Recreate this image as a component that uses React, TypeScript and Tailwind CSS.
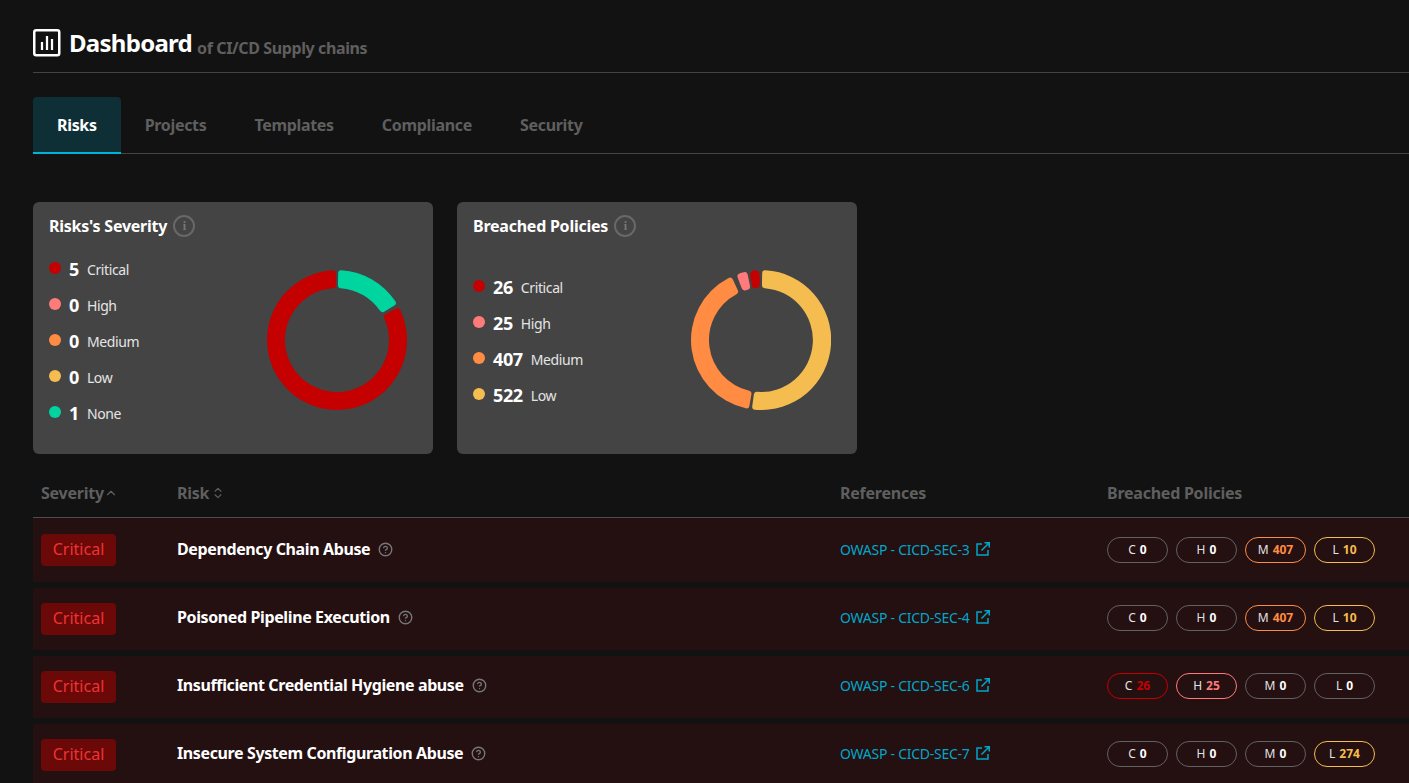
import { ChevronUp, ChevronsUpDown, CircleHelp } from "lucide-react";

const COLORS = {
  critical: "#c40000",
  high: "#ff7b7b",
  medium: "#ff8c42",
  low: "#f5bd4f",
  none: "#00d5a0",
};

type Seg = { color: string; from: number; to: number; corner?: number };

function pt(cx: number, cy: number, r: number, deg: number) {
  const a = (deg * Math.PI) / 180;
  return `${(cx + r * Math.sin(a)).toFixed(2)} ${(cy - r * Math.cos(a)).toFixed(2)}`;
}

// annular sector with rounded corners, angles clockwise from 12 o'clock
function sector(cx: number, cy: number, ro: number, ri: number, a0: number, a1: number, c: number) {
  const dO = (Math.asin(c / (ro - c)) * 180) / Math.PI;
  const dI = (Math.asin(c / (ri + c)) * 180) / Math.PI;
  const rOe = Math.sqrt((ro - c) ** 2 - c ** 2);
  const rIe = Math.sqrt((ri + c) ** 2 - c ** 2);
  const large = a1 - a0 > 180 ? 1 : 0;
  return [
    `M ${pt(cx, cy, rOe, a0)}`,
    `A ${c} ${c} 0 0 1 ${pt(cx, cy, ro, a0 + dO)}`,
    `A ${ro} ${ro} 0 ${large} 1 ${pt(cx, cy, ro, a1 - dO)}`,
    `A ${c} ${c} 0 0 1 ${pt(cx, cy, rOe, a1)}`,
    `L ${pt(cx, cy, rIe, a1)}`,
    `A ${c} ${c} 0 0 1 ${pt(cx, cy, ri, a1 - dI)}`,
    `A ${ri} ${ri} 0 ${large} 0 ${pt(cx, cy, ri, a0 + dI)}`,
    `A ${c} ${c} 0 0 1 ${pt(cx, cy, rIe, a0)}`,
    "Z",
  ].join(" ");
}

function Donut({ segs }: { segs: Seg[] }) {
  return (
    <svg width="140" height="140" viewBox="0 0 140 140" className="shrink-0">
      {segs.map((s) => (
        <path key={s.from} d={sector(70, 70, 70, 52, s.from, s.to, s.corner ?? 3)} fill={s.color} />
      ))}
    </svg>
  );
}

function InfoIcon() {
  return (
    <span className="flex h-[22px] w-[22px] items-center justify-center rounded-full border-2 border-[#686868] font-['Liberation_Serif',serif] text-[12px] leading-none font-bold text-[#777777]">
      i
    </span>
  );
}

function Card({
  title,
  legend,
  segs,
  centered,
}: {
  title: string;
  legend: { color: string; n: number; label: string }[];
  segs: Seg[];
  centered?: boolean;
}) {
  return (
    <div className="flex h-[252px] w-[400px] flex-col rounded-md bg-[#444444] pt-[13px] pr-[26px] pl-4">
      <div className="flex h-[22px] items-center gap-[6px]">
        <span className="text-[16px] font-bold tracking-[-0.015em] text-white">{title}</span>
        <InfoIcon />
      </div>
      <div className="flex flex-1 items-start justify-between">
        <div className={centered ? "flex flex-col gap-[10px] pt-[37px]" : "flex flex-col gap-[10px] pt-[19px]"}>
          {legend.map((l) => (
            <div key={l.label} className="flex h-[26px] items-center">
              <span className="mb-[2px] h-3 w-3 rounded-full" style={{ backgroundColor: l.color }} />
              <span className="ml-2 text-[18px] leading-none font-bold text-white">{l.n}</span>
              <span className="ml-2 pt-[2px] text-[14px] leading-none text-[#e4e4e4]">{l.label}</span>
            </div>
          ))}
        </div>
        <div className="pt-[33px]">
          <Donut segs={segs} />
        </div>
      </div>
    </div>
  );
}

function LinkOut() {
  return (
    <svg width="16" height="16" viewBox="0 0 16 16" fill="none" stroke="currentColor" strokeWidth="1.5" className="shrink-0">
      <path d="M7 3H2v11h11V9" />
      <path d="M6.5 9.5 14 2M9.5 1.75h4.75V6.5" />
    </svg>
  );
}

function Pill({ k, v, color }: { k: string; v: number; color: string }) {
  const on = v > 0;
  return (
    <span
      className="flex h-[26px] w-[61px] items-center justify-center gap-1 rounded-full border text-[12px] tracking-normal text-[#e2e2e2]"
      style={{ borderColor: on ? color : "#626262" }}
    >
      {k}
      <span className="font-bold" style={{ color: on ? color : "#ffffff" }}>
        {v}
      </span>
    </span>
  );
}

const ROWS = [
  { risk: "Dependency Chain Abuse", ref: "OWASP - CICD-SEC-3", c: 0, h: 0, m: 407, l: 10, first: true },
  { risk: "Poisoned Pipeline Execution", ref: "OWASP - CICD-SEC-4", c: 0, h: 0, m: 407, l: 10 },
  { risk: "Insufficient Credential Hygiene abuse", ref: "OWASP - CICD-SEC-6", c: 26, h: 25, m: 0, l: 0 },
  { risk: "Insecure System Configuration Abuse", ref: "OWASP - CICD-SEC-7", c: 0, h: 0, m: 0, l: 274 },
];

const TABS = ["Risks", "Projects", "Templates", "Compliance", "Security"];

export default function App() {
  return (
    <div className="h-screen overflow-hidden bg-[#121212] pl-[33px] font-['Noto_Sans',sans-serif] tracking-[-0.024em] text-white">
      <header className="flex h-[73px] items-start border-b border-[#444444] pt-[29px]">
        <svg width="28" height="28" viewBox="0 0 28 28" fill="none" stroke="white" className="shrink-0">
          <rect x="1.25" y="1.25" width="25" height="25" rx="2" strokeWidth="2.5" />
          <path d="M9 13v8M14 7v14M19 10v11" strokeWidth="2.25" />
        </svg>
        <h1 className="-mt-px ml-2 text-[24px] leading-[30px] font-bold tracking-[-0.03em]">Dashboard</h1>
        <span className="mt-2 ml-[5px] text-[16px] leading-[22px] font-bold text-[#5f5f5f]">of CI/CD Supply chains</span>
      </header>

      <nav className="mt-6 flex h-[57px] border-b border-[#444444] tracking-[-0.02em]">
        {TABS.map((t, i) => (
          <div
            key={t}
            className={
              i === 0
                ? "-mb-px flex h-[57px] items-center rounded-t border-b-2 border-[#00b4d8] bg-[#0f2f36] px-6 text-[16px] font-bold text-white"
                : "flex h-[56px] items-center px-6 text-[16px] font-bold text-[#5f5f5f]"
            }
          >
            {t}
          </div>
        ))}
      </nav>

      <section className="mt-12 flex gap-6">
        <Card
          title="Risks's Severity"
          legend={[
            { color: COLORS.critical, n: 5, label: "Critical" },
            { color: COLORS.high, n: 0, label: "High" },
            { color: COLORS.medium, n: 0, label: "Medium" },
            { color: COLORS.low, n: 0, label: "Low" },
            { color: COLORS.none, n: 1, label: "None" },
          ]}
          segs={[
            { color: COLORS.none, from: 1, to: 59 },
            { color: COLORS.critical, from: 62, to: 359 },
          ]}
        />
        <Card
          title="Breached Policies"
          centered
          legend={[
            { color: COLORS.critical, n: 26, label: "Critical" },
            { color: COLORS.high, n: 25, label: "High" },
            { color: COLORS.medium, n: 407, label: "Medium" },
            { color: COLORS.low, n: 522, label: "Low" },
          ]}
          segs={[
            { color: COLORS.low, from: 1, to: 187.5 },
            { color: COLORS.medium, from: 190, to: 335 },
            { color: COLORS.high, from: 339.5, to: 348.5, corner: 3.5 },
            { color: COLORS.critical, from: 350.5, to: 358.8, corner: 4 },
          ]}
        />
      </section>

      <div className="mt-[15px] grid h-[49px] grid-cols-[136px_663px_267px_1fr] items-center border-b border-[#4d4d4d] pl-2 text-[16px] font-bold tracking-[-0.015em] text-[#5f5f5f]">
        <div className="flex items-center">
          Severity
          <ChevronUp size={14} strokeWidth={2} />
        </div>
        <div className="flex items-center gap-[2px]">
          Risk
          <ChevronsUpDown size={14} strokeWidth={2} />
        </div>
        <div>References</div>
        <div>Breached Policies</div>
      </div>

      <div className="flex flex-col gap-[6px]">
        {ROWS.map((r) => (
          <div
            key={r.risk}
            className={
              r.first
                ? "grid h-16 shrink-0 grid-cols-[136px_663px_267px_1fr] items-center bg-[#240f11] pl-2"
                : "grid h-[62px] shrink-0 grid-cols-[136px_663px_267px_1fr] items-center bg-[#240f11] pl-2"
            }
          >
            <div>
              <span className="flex h-8 w-[75px] items-center justify-center rounded bg-[#6b0808] pb-[2px] text-[16px] tracking-normal text-[#ee3333]">
                Critical
              </span>
            </div>
            <div className={r.first ? "flex items-center gap-2 pb-[2px] text-[16px] font-bold text-white" : "flex items-center gap-2 pb-1 text-[16px] font-bold text-white"}>
              {r.risk}
              <CircleHelp size={15} strokeWidth={2.25} className="text-[#777777]" />
            </div>
            <div className={r.first ? "flex items-center gap-[5px] pb-[2px] text-[14px] tracking-[-0.018em] text-[#00a7c9]" : "flex items-center gap-[5px] pb-1 text-[14px] tracking-[-0.018em] text-[#00a7c9]"}>
              {r.ref}
              <LinkOut />
            </div>
            <div className={r.first ? "flex items-center gap-2" : "flex items-center gap-2 pb-[2px]"}>
              <Pill k="C" v={r.c} color={COLORS.critical} />
              <Pill k="H" v={r.h} color={COLORS.high} />
              <Pill k="M" v={r.m} color={COLORS.medium} />
              <Pill k="L" v={r.l} color={COLORS.low} />
            </div>
          </div>
        ))}
      </div>
    </div>
  );
}
